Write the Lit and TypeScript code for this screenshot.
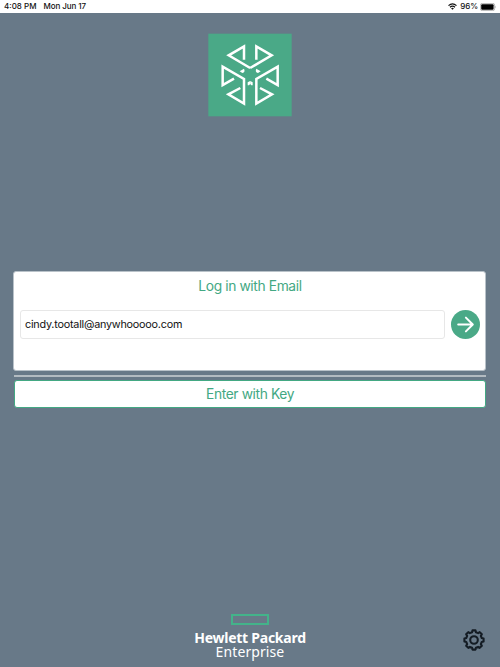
import { LitElement, html, css, svg } from "lit";
import { customElement, state } from "lit/decorators.js";

const gearPath = (() => {
  const teeth = 8;
  const pts: string[] = [];
  for (let i = 0; i < teeth; i++) {
    const base = (i * 360) / teeth - 90;
    for (const [offset, r] of [[-14, 8], [-9, 9.7], [9, 9.7], [14, 8]]) {
      const a = ((base + offset) * Math.PI) / 180;
      pts.push(`${(12 + r * Math.cos(a)).toFixed(2)} ${(12 + r * Math.sin(a)).toFixed(2)}`);
    }
  }
  return `M${pts.join("L")}Z`;
})();

@customElement("status-bar")
class StatusBar extends LitElement {
  static styles = css`
    :host { display: flex; height: 13px; flex: none; background: #fff; color: #111;
      font: 500 8px/13px Inter, sans-serif; padding: 0 3px 0 4px; box-sizing: border-box; }
    .date { margin-left: 7px; letter-spacing: -0.08px; }
    .right { margin-left: auto; display: flex; align-items: center; }
    .percent { margin: 0 2px 0 3px; font-size: 8px; letter-spacing: -0.1px; }
    svg { display: block; }
  `;
  render() {
    return html`
      <span>4:08 PM</span><span class="date">Mon Jun 17</span>
      <div class="right">
        <svg width="9" height="7" viewBox="0 0 18 14" fill="none" stroke="#111" stroke-width="2.5">
          <path d="M1 5.2Q9-2 17 5.2M4 8.6Q9 4 14 8.6" />
          <path d="M6.2 10.8Q9 8.6 11.8 10.8L9 13.7Z" fill="#111" stroke="none" />
        </svg>
        <span class="percent">96%</span>
        <svg width="17" height="8" viewBox="0 0 17 8">
          <rect x=".4" y=".4" width="14.2" height="7.2" rx="1.8" fill="none" stroke="#999" stroke-width=".7" />
          <rect x="1.2" y="1.2" width="12.4" height="5.6" rx="1" fill="#000" />
          <path d="M15.4 2.8Q16.5 4 15.4 5.2Z" fill="#888" />
        </svg>
      </div>`;
  }
}

@customElement("app-logo")
class AppLogo extends LitElement {
  static styles = css`
    :host { display: block; width: 84px; height: 84px; }
    svg { display: block; }
  `;
  private half() {
    return svg`
      <path d="M132 102V62L86 89L150.500 127" />
      <path d="M102 159L68 178V123L132 160V234L85 206L121 187" />
      <path d="M119 137L132 129Q137 139 127 142Z" fill="#fff" stroke="none" />
      <path d="M150.500 166L143 170V179H147L150.500 175Z" fill="#fff" stroke="none" />`;
  }
  render() {
    return html`<svg width="84" height="84" viewBox="24 22 252 252" fill="none" stroke="#fff" stroke-width="7.5">
      <rect x="25" y="24" width="250" height="248" fill="#4aa987" stroke="none" />
      <g>${this.half()}</g>
      <g transform="translate(301 0) scale(-1 1)">${this.half()}</g>
    </svg>`;
  }
}

@customElement("app-root")
class AppRoot extends LitElement {
  static styles = css`
    :host { display: flex; flex-direction: column; height: 667px; background: #687988;
      font-family: Inter, sans-serif; overflow: hidden; }
    main { flex: 1; display: flex; flex-direction: column; align-items: center; padding: 20px 14px 0 13px; }
    app-logo { margin-left: 1px; }
    .panel { box-sizing: border-box; width: 473px; height: 100px; margin-top: 154px; padding: 5px 5px 0 6px;
      background: #fff; border: 1px solid #b9c2c9; border-radius: 3px; }
    h1, .key { font-weight: 400; font-size: 13.8px; color: #43a883; text-align: center; }
    h1 { margin: 0; height: 18px; line-height: 18px; letter-spacing: -0.38px; }
    .row { display: flex; align-items: center; gap: 6px; margin-top: 15px; }
    input { box-sizing: border-box; width: 425px; height: 29px; margin: 0; padding: 0 4px 1px;
      border: 1px solid #e7e7e7; border-radius: 3px; background: #fff; color: #111;
      font: 400 10.8px Inter, sans-serif; letter-spacing: -0.22px; outline: none; }
    .go { flex: none; width: 29px; height: 29px; padding: 0; border: 0; border-radius: 50%; background: #4aa987; }
    svg { display: block; }
    .divider { width: 472px; align-self: flex-end; height: 2px; margin-top: 4px; background: #b3bbc1; }
    .key { box-sizing: border-box; width: 472px; align-self: flex-end; height: 28px; margin-top: 3px; padding: 0;
      font-family: Inter, sans-serif; line-height: 24px; letter-spacing: -0.38px;
      background: #fff; border: 1px solid #43a883; border-radius: 3px; }
    footer { flex: none; display: grid; grid-template-columns: 1fr auto 1fr; height: 54px; color: #fff; }
    .brand { grid-column: 2; display: flex; flex-direction: column; align-items: center; text-align: center; }
    .mark { box-sizing: border-box; width: 38px; height: 11px; margin-top: 1px; border: 2px solid #43b38a; }
    .name { font: 700 14px/15px "Noto Sans", sans-serif; margin-top: 5px; letter-spacing: -0.25px; }
    .unit { font: 400 14px/14px "Noto Sans", sans-serif; letter-spacing: 0.1px; }
    .settings { justify-self: end; align-self: start; margin: 15px 14px 0 0; padding: 0; border: 0; background: none; }
  `;

  @state() private email = "cindy.tootall@anywhooooo.com";

  render() {
    return html`
      <status-bar></status-bar>
      <main>
        <app-logo></app-logo>
        <section class="panel">
          <h1>Log in with Email</h1>
          <div class="row">
            <input aria-label="Email" .value=${this.email}
              @input=${(e: Event) => (this.email = (e.target as HTMLInputElement).value)} />
            <button class="go" aria-label="Continue">
              <svg width="29" height="29" viewBox="0 0 29 29" fill="none" stroke="#fff" stroke-width="2"
                stroke-linecap="round" stroke-linejoin="round">
                <path d="M7.2 14.5H21.4M14.9 7.6L21.8 14.5L14.9 21.4" />
              </svg>
            </button>
          </div>
        </section>
        <div class="divider"></div>
        <button class="key">Enter with Key</button>
      </main>
      <footer>
        <div class="brand">
          <div class="mark"></div>
          <div class="name">Hewlett Packard</div>
          <div class="unit">Enterprise</div>
        </div>
        <button class="settings" aria-label="Settings">
          <svg width="24" height="24" viewBox="0 0 24 24" fill="none" stroke="#141c24" stroke-width="2.1" stroke-linejoin="round">
            <path d=${gearPath} />
            <circle cx="12" cy="12" r="3.8" />
          </svg>
        </button>
      </footer>`;
  }
}
